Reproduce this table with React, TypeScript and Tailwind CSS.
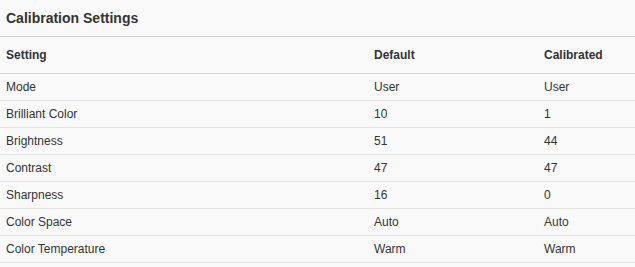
const rows: [string, string, string][] = [
  ["Mode", "User", "User"],
  ["Brilliant Color", "10", "1"],
  ["Brightness", "51", "44"],
  ["Contrast", "47", "47"],
  ["Sharpness", "16", "0"],
  ["Color Space", "Auto", "Auto"],
  ["Color Temperature", "Warm", "Warm"],
];

export default function App() {
  return (
    <div className="w-[635px] h-[267px] bg-[#f9f9f9] text-[#333] font-['Liberation_Sans',Arial,sans-serif]">
      <div className="h-[37px] flex items-center border-b border-[#cfcfcf] px-[6px]">
        <h2 className="text-[14px] font-bold leading-[18px]">Calibration Settings</h2>
      </div>
      <div className="grid grid-cols-[367px_170px_1fr] h-[37px] items-center border-b border-[#d2d2d2] text-[12px] font-bold">
        <div className="px-[6px]">Setting</div>
        <div className="px-[7px]">Default</div>
        <div className="px-[7px]">Calibrated</div>
      </div>
      {rows.map(([name, def, cal]) => (
        <div
          key={name}
          className="grid grid-cols-[367px_170px_1fr] h-[27px] items-center border-b border-[#e4e4e4] text-[12px]"
        >
          <div className="px-[6px]">{name}</div>
          <div className="px-[7px]">{def}</div>
          <div className="px-[7px]">{cal}</div>
        </div>
      ))}
    </div>
  );
}
